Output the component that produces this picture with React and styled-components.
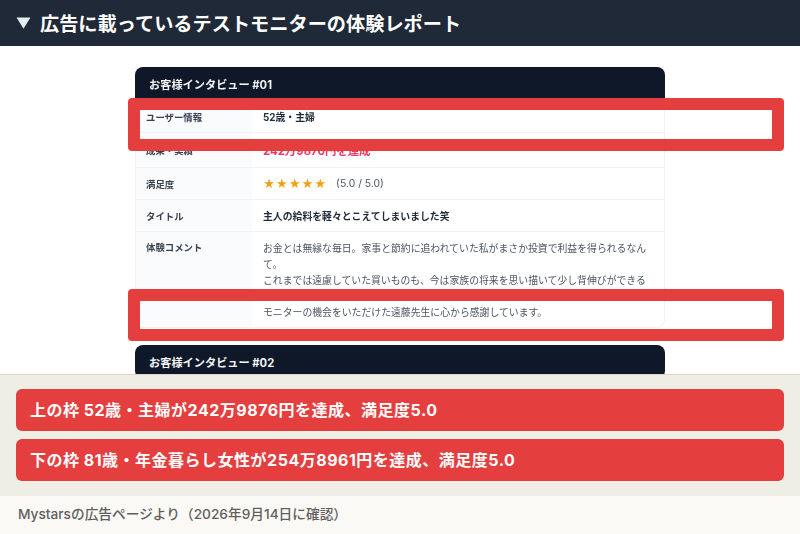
import React from "react";
import styled, { createGlobalStyle } from "styled-components";

const FONT = `Inter, "Noto Sans CJK JP", "Noto Sans", sans-serif`;

const Global = createGlobalStyle`
  html, body { margin: 0; padding: 0; background: #fff; }
  body { font-family: ${FONT}; }
  * { box-sizing: border-box; }
`;

const Page = styled.div`
  width: 800px;
  height: 534px;
  display: flex;
  flex-direction: column;
  overflow: hidden;
`;

const TitleBar = styled.h1`
  margin: 0;
  height: 46px;
  flex: none;
  display: flex;
  align-items: center;
  gap: 9px;
  padding: 0 0 1px 16px;
  background: #1f2937;
  color: #fff;
  font-size: 19.2px;
  font-weight: 700;
  white-space: nowrap;
`;

const Triangle = styled.svg`
  width: 15px;
  height: 12px;
  flex: none;
  margin-top: 1px;
`;

const Shot = styled.section`
  position: relative;
  height: 328px;
  flex: none;
  overflow: hidden;
  background: #fff;
  padding-top: 21px;
`;

const ShotInner = styled.div`
  filter: blur(0.35px);
  display: flex;
  flex-direction: column;
  align-items: center;
  gap: 17px;
`;

const Card = styled.article`
  width: 530px;
  flex: none;
  border-radius: 8px;
  background: #fff;
  overflow: hidden;
`;

const CardHead = styled.header`
  height: 34px;
  display: flex;
  align-items: center;
  padding: 0 14px;
  background: #0f1829;
  color: #f3f4f6;
  font-size: 11.2px;
  font-weight: 700;
`;

const CardBody = styled.div`
  border: 1px solid #f0f2f5;
  border-top: 0;
  border-radius: 0 0 8px 8px;
`;

const Row = styled.div`
  display: grid;
  grid-template-columns: 116px 1fr;
  min-height: ${(p) => p.$h}px;
  border-bottom: ${(p) => (p.$last ? "0" : "1px solid #f1f3f6")};
`;

const Label = styled.div`
  display: flex;
  align-items: ${(p) => (p.$top ? "flex-start" : "center")};
  padding: ${(p) => (p.$top ? "8px" : "0")} 10px 0;
  background: #fafbfc;
  color: #374151;
  font-size: 9.4px;
  font-weight: 700;
`;

const Value = styled.div`
  display: flex;
  align-items: center;
  padding: 0 11px;
  color: #1f2937;
  font-size: 9.85px;
  font-weight: 700;
`;

const Pink = styled.span`
  color: #ec3a62;
  font-size: 11.4px;
  font-weight: 700;
`;

const Stars = styled.span`
  color: #f59e0b;
  font-size: 11.5px;
  letter-spacing: 0.8px;
  font-weight: 400;
  margin-right: 9px;
`;

const Score = styled.span`
  color: #4b5563;
  font-size: 10.4px;
  font-weight: 400;
`;

const Comment = styled.div`
  padding: 8px 11px 5px;
  color: #4b5563;
  font-size: 9.85px;
  font-weight: 400;
  line-height: 16px;
`;

const Frame = styled.div`
  position: absolute;
  left: 128px;
  top: ${(p) => p.$top}px;
  width: 656px;
  height: ${(p) => p.$h}px;
  border: 12px solid #e53e3e;
  border-radius: 4px;
`;

const Notes = styled.section`
  flex: none;
  height: 122px;
  display: flex;
  flex-direction: column;
  gap: 8px;
  padding: 14px 16px 0;
  background: #eeede6;
  border-top: 1px solid #ddd8c9;
`;

const Note = styled.p`
  margin: 0;
  height: 42px;
  display: flex;
  align-items: center;
  padding: 0 14px 2px;
  background: #e53e3e;
  border-radius: 6px;
  color: #fff;
  font-size: 16px;
  font-weight: 700;
  letter-spacing: 0.5px;
  white-space: pre;
`;

const Source = styled.footer`
  flex: 1;
  display: flex;
  align-items: center;
  padding: 0 18px 5px;
  background: #faf9f5;
  color: #5f5f5f;
  font-size: 13.7px;
  font-weight: 500;
  white-space: nowrap;
`;

export default function App() {
  return (
    <Page>
      <Global />
      <TitleBar>
        <Triangle viewBox="0 0 15 12" aria-hidden="true">
          <path d="M0.5 0.5H14.5L7.5 11.8Z" fill="#e4ecea" />
        </Triangle>
        広告に載っているテストモニターの体験レポート
      </TitleBar>
      <Shot>
        <ShotInner>
          <Card>
            <CardHead>お客様インタビュー #01</CardHead>
            <CardBody>
              <Row $h={32}>
                <Label>ユーザー情報</Label>
                <Value>52歳・主婦</Value>
              </Row>
              <Row $h={35}>
                <Label>成果・実績</Label>
                <Value><Pink>242万9876円を達成</Pink></Value>
              </Row>
              <Row $h={32}>
                <Label>満足度</Label>
                <Value><Stars>★★★★★</Stars><Score>(5.0 / 5.0)</Score></Value>
              </Row>
              <Row $h={32}>
                <Label>タイトル</Label>
                <Value>主人の給料を軽々とこえてしまいました笑</Value>
              </Row>
              <Row $h={95} $last>
                <Label $top>体験コメント</Label>
                <Comment>
                  お金とは無縁な毎日。家事と節約に追われていた私がまさか投資で利益を得られるなんて。
                  <br />
                  これまでは遠慮していた買いものも、今は家族の将来を思い描いて少し背伸びができるようになりました。
                  <br />
                  モニターの機会をいただけた遠藤先生に心から感謝しています。
                </Comment>
              </Row>
            </CardBody>
          </Card>
          <Card>
            <CardHead>お客様インタビュー #02</CardHead>
          </Card>
        </ShotInner>
        <Frame $top={52} $h={53} />
        <Frame $top={243} $h={52} />
      </Shot>
      <Notes>
        <Note>上の枠 52歳・主婦が242万9876円を達成、満足度5.0</Note>
        <Note>下の枠 81歳・年金暮らし女性が254万8961円を達成、満足度5.0</Note>
      </Notes>
      <Source>Mystarsの広告ページより（2026年9月14日に確認）</Source>
    </Page>
  );
}
